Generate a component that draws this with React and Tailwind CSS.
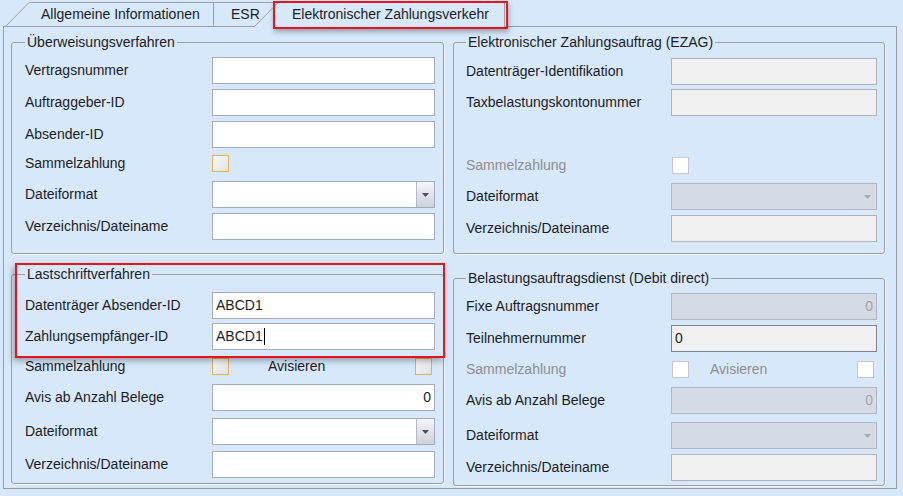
import clsx from 'clsx';

const BG = 'bg-[#d7e8fa]';

function Box({ wide, tone = 'white', align = 'left', children }) {
  const tones = {
    white: 'bg-white border-[#a5acb5]',
    gray: 'bg-[#f0f0f0] border-[#aeb2b8]',
    blue: 'bg-[#d4dbe6] border-[#b1b7c0] text-[#a3a3a3]',
    dark: 'bg-[#f0f0f0] border-[#80858c]',
  };
  return (
    <div
      className={clsx(
        'h-[27px] border flex items-center px-[3px] shrink-0',
        wide ? 'w-[223px]' : 'w-[206px]',
        tones[tone],
        align === 'right' && 'justify-end'
      )}
    >
      {children}
    </div>
  );
}

function Combo({ wide, disabled }) {
  return (
    <div
      className={clsx(
        'h-[27px] border flex justify-end shrink-0',
        wide ? 'w-[223px]' : 'w-[206px]',
        disabled ? 'bg-[#d4dbe6] border-[#b1b7c0]' : 'bg-white border-[#a5acb5]'
      )}
    >
      <div
        className={clsx(
          'w-[18px] h-full flex items-center justify-center',
          !disabled && 'border-l border-[#b3b9c1] bg-linear-to-b from-[#f4f6f9] to-[#cbd2db]'
        )}
      >
        <svg width="7" height="4" viewBox="0 0 7 4">
          <path d="M0 0h7L3.5 4z" fill={disabled ? '#a4aab3' : '#4b5058'} />
        </svg>
      </div>
    </div>
  );
}

function Check({ disabled }) {
  return (
    <div
      className={clsx(
        'w-[17px] h-[17px] border shrink-0',
        disabled
          ? 'bg-white border-[#c3c7cd]'
          : 'border-[#deb25c] bg-linear-to-br from-[#f8f8f8] to-[#e2e2e2]'
      )}
    />
  );
}

function Row({ label, labelW, mt, h = 'h-[27px]', muted, children }) {
  return (
    <div className={clsx('flex items-center', h, mt)}>
      <div className={clsx(labelW, 'shrink-0 whitespace-nowrap', muted && 'text-[#8d8d8d]')}>{label}</div>
      {children}
    </div>
  );
}

function Group({ title, className, children }) {
  return (
    <fieldset className={clsx('border border-[#9d9d9d] rounded-[3px] shadow-[1px_1px_0_#eef5fd]', className)}>
      <legend className="px-[2px] leading-[18px] whitespace-nowrap">{title}</legend>
      {children}
    </fieldset>
  );
}

// slanted left edge of a tab; "front" fills the area below the edge so the tab covers its neighbour
function Slant({ front }) {
  return (
    <svg width="23" height={front ? 25 : 24} viewBox={front ? '0 0 23 25' : '0 0 23 24'} className="shrink-0">
      {front && <path d="M0 24L23 0.5V25H0z" fill="#d7e8fa" />}
      {front && <path d="M0 0.5H23" stroke="#a0a0a0" fill="none" />}
      <path d="M0 24L23 0.5" stroke="#a0a0a0" fill="none" />
    </svg>
  );
}

export default function App() {
  const L = 'w-[187px]';
  const R = 'w-[205px]';
  return (
    <div
      className={clsx(
        'w-[903px] h-[496px] overflow-hidden relative text-[14px] text-[#1c1c1c]',
        BG,
        "font-['Liberation_Sans',Arial,sans-serif]"
      )}
    >
      {/* tab strip */}
      <div className="flex h-[26px] items-end pl-[6px] relative z-10">
        <div className="flex h-[24px]">
          <Slant />
          <div className="w-[185px] border-t border-r border-[#a0a0a0] pl-[12px] leading-[22px]">
            Allgemeine Informationen
          </div>
        </div>
        <div className="flex h-[24px] w-[41px]">
          <div className="w-[41px] border-t border-[#a0a0a0] pl-[17px] leading-[22px] whitespace-nowrap">ESR</div>
        </div>
        <div className="flex h-[25px] mb-[-1px] relative">
          <Slant front />
          <div className={clsx('w-[227px] border-t border-r border-[#a0a0a0] pl-[14px] leading-[22px]', BG)}>
            Elektronischer Zahlungsverkehr
          </div>
        </div>
      </div>

      {/* red highlight around active tab */}
      <div className="absolute left-[273px] top-[1px] w-[235px] h-[28px] border-2 border-[#e8141b] shadow-[1px_3px_5px_rgba(0,0,0,0.3)] z-20" />

      {/* tab page */}
      <div className="ml-[3px] w-[894px] h-[463px] border border-[#9c9c9c] flex pl-[7px] gap-[9px]">
        {/* left column */}
        <div className="w-[433px] flex flex-col relative">
          <Group title="Überweisungsverfahren" className="mt-[6px] h-[221px] pl-[13px]">
            <Row label="Vertragsnummer" labelW={L} mt="mt-[6px]">
              <Box wide />
            </Row>
            <Row label="Auftraggeber-ID" labelW={L} mt="mt-[5px]">
              <Box wide />
            </Row>
            <Row label="Absender-ID" labelW={L} mt="mt-[5px]">
              <Box wide />
            </Row>
            <Row label="Sammelzahlung" labelW={L} mt="mt-[3px]" h="h-[25px]">
              <Check />
            </Row>
            <Row label="Dateiformat" labelW={L} mt="mt-[5px]">
              <Combo wide />
            </Row>
            <Row label="Verzeichnis/Dateiname" labelW={L} mt="mt-[5px]">
              <Box wide />
            </Row>
          </Group>

          <Group title="Lastschriftverfahren" className="mt-[11px] h-[219px] pl-[13px]">
            <Row label="Datenträger Absender-ID" labelW={L} mt="mt-[9px]">
              <Box wide>ABCD1</Box>
            </Row>
            <Row label="Zahlungsempfänger-ID" labelW={L} mt="mt-[4px]">
              <Box wide>
                ABCD1<span className="inline-block w-px h-[17px] bg-black ml-[1px]" />
              </Box>
            </Row>
            <Row label="Sammelzahlung" labelW={L} mt="mt-[4px]" h="h-[25px]">
              <Check />
              <span className="ml-[39px] flex-1">Avisieren</span>
              <div className="mr-[11px]">
                <Check />
              </div>
            </Row>
            <Row label="Avis ab Anzahl Belege" labelW={L} mt="mt-[5px]">
              <Box wide align="right">0</Box>
            </Row>
            <Row label="Dateiformat" labelW={L} mt="mt-[7px]">
              <Combo wide />
            </Row>
            <Row label="Verzeichnis/Dateiname" labelW={L} mt="mt-[6px]">
              <Box wide />
            </Row>
          </Group>

          {/* red highlight */}
          <div className="absolute left-[4px] top-[236px] w-[430px] h-[95px] border-2 border-[#e8141b] shadow-[-2px_3px_6px_rgba(0,0,0,0.3)]" />
        </div>

        {/* right column */}
        <div className="w-[432px] flex flex-col">
          <Group title="Elektronischer Zahlungsauftrag (EZAG)" className="mt-[6px] h-[221px] pl-[12px]">
            <Row label="Datenträger-Identifikation" labelW={R} mt="mt-[7px]">
              <Box tone="gray" />
            </Row>
            <Row label="Taxbelastungskontonummer" labelW={R} mt="mt-[4px]">
              <Box tone="gray" />
            </Row>
            <Row label="Sammelzahlung" labelW={R} mt="mt-[37px]" h="h-[25px]" muted>
              <div className="ml-[1px]">
                <Check disabled />
              </div>
            </Row>
            <Row label="Dateiformat" labelW={R} mt="mt-[5px]">
              <Combo disabled />
            </Row>
            <Row label="Verzeichnis/Dateiname" labelW={R} mt="mt-[5px]">
              <Box tone="gray" />
            </Row>
          </Group>

          <Group title="Belastungsauftragsdienst (Debit direct)" className="mt-[15px] h-[217px] pl-[12px]">
            <Row label="Fixe Auftragsnummer" labelW={R} mt="mt-[6px]">
              <Box tone="blue" align="right">0</Box>
            </Row>
            <Row label="Teilnehmernummer" labelW={R} mt="mt-[5px]">
              <Box tone="dark">0</Box>
            </Row>
            <Row label="Sammelzahlung" labelW={R} mt="mt-[5px]" h="h-[25px]" muted>
              <div className="ml-[1px]">
                <Check disabled />
              </div>
              <span className="ml-[21px] flex-1 text-[#8d8d8d]">Avisieren</span>
              <div className="mr-[10px]">
                <Check disabled />
              </div>
            </Row>
            <Row label="Avis ab Anzahl Belege" labelW={R} mt="mt-[5px]">
              <Box tone="blue" align="right">0</Box>
            </Row>
            <Row label="Dateiformat" labelW={R} mt="mt-[8px]">
              <Combo disabled />
            </Row>
            <Row label="Verzeichnis/Dateiname" labelW={R} mt="mt-[5px]">
              <Box tone="gray" />
            </Row>
          </Group>
        </div>
      </div>
    </div>
  );
}
